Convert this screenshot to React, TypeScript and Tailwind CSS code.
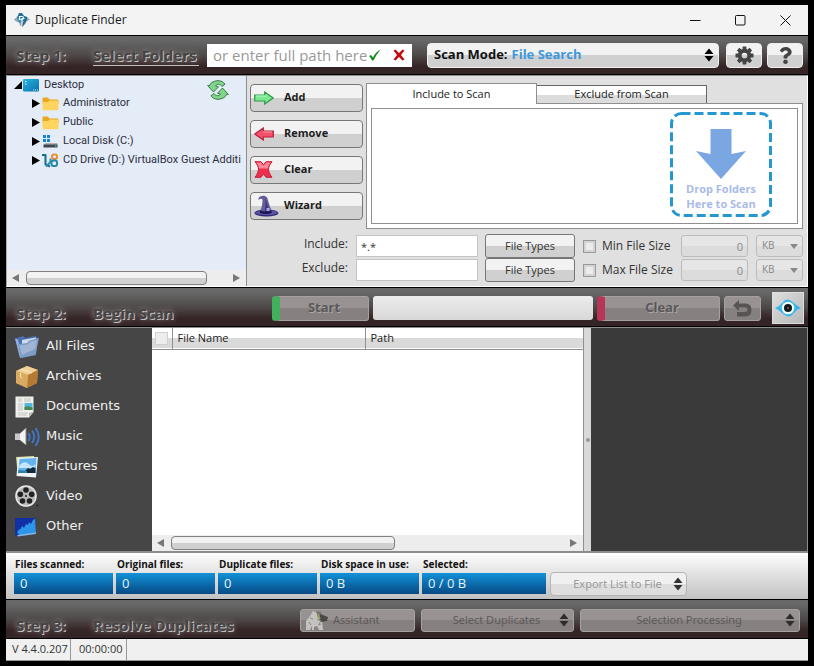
import type { ReactNode } from 'react';
import clsx from 'clsx';
import { FaQuestion } from 'react-icons/fa';

const silver = 'bg-linear-to-b from-[#f2f2f2] from-50% to-[#d0d0d0] to-50%';

function AppLogo() {
  return (
    <svg width="16" height="16" viewBox="0 0 16 16" aria-hidden="true">
      <path d="M0 7.500 4 4l1-3 3 1 2 2 3 1 3 2.500-4 2-2 1-1 4-3-1-1-3-3-1z" fill="#8fa9bd" />
      <path d="M5 1h3l2 3 3 1v3l-4 3-4-1-2-4z" fill="#1f7196" />
      <path d="M3 6h4v4l-2-1z" fill="#4597c0" />
      <path d="M5.500 4.500h2.500a1.500 1.500 0 0 1 0 3H5.500zM10.500 6.500H8V14M8 10h2.500" fill="none" stroke="#eef6fa" strokeWidth="1.200" />
      <path d="M9 10l4-2-2 4-3 3z" fill="#164e77" opacity=".8" />
    </svg>
  );
}

function DesktopIcon() {
  return (
    <svg width="16" height="13" viewBox="0 0 16 13" aria-hidden="true">
      <defs>
        <linearGradient id="desk" x1="0" y1="0" x2="1" y2="1">
          <stop offset="0" stopColor="#2ab4e0" />
          <stop offset="1" stopColor="#0871ad" />
        </linearGradient>
      </defs>
      <rect width="16" height="12.500" rx="1" fill="url(#desk)" />
      <path d="M2 2.500h1.500M2 5h1.500M10 11h1M12 11h1M14 11h1" stroke="#d9f6ff" strokeWidth="1.200" />
    </svg>
  );
}

function FolderIcon() {
  return (
    <svg width="17" height="14" viewBox="0 0 17 14" aria-hidden="true">
      <path d="M.5 1.500Q.5.5 1.500.5h4.300l1.700 2H15q1.500 0 1.500 1V7H.5z" fill="#e9a820" />
      <path d="M.5 5h5.500l1.800-1.500h7.700q1 0 1 1V12q0 1.300-1.300 1.300H1.800Q.5 13.300.5 12z" fill="#ffd45e" />
    </svg>
  );
}

function DiskIcon() {
  return (
    <svg width="17" height="14" viewBox="0 0 17 14" aria-hidden="true">
      <path d="M1 0h3v3H1zM5 0h3v3H5zM1 4h3v3H1zM5 4h3v3H5z" fill="#1486d8" />
      <path d="M3 8h12l1 2H2z" fill="#aeb4b8" />
      <path d="M1.500 9.500h14v3h-14z" fill="#3d474d" />
      <path d="M13 11h1.500" stroke="#4fe3a2" />
    </svg>
  );
}

function DriveIcon() {
  return (
    <svg width="17" height="15" viewBox="0 0 17 15" aria-hidden="true">
      <path d="M0 2h3.500v9.500L8 13.500" fill="none" stroke="#156b8c" strokeWidth="2" strokeLinejoin="round" />
      <path d="M4 13.500 8.500 9V5.500" fill="none" stroke="#2b8fb0" strokeWidth="2" />
      <rect x="10" y="1.500" width="5" height="4.500" rx="2" fill="none" stroke="#e79035" strokeWidth="2" />
      <rect x="9.500" y="7.500" width="5.500" height="5.500" rx="2" fill="none" stroke="#2587a8" strokeWidth="2" />
    </svg>
  );
}

function RefreshIcon() {
  return (
    <svg width="22" height="20" viewBox="0 0 22 20" fill="#7fd688" stroke="#3c7a48" strokeLinejoin="round" aria-hidden="true">
      <path d="M2 6C3.500 2.500 7.500.7 11 .7c3 0 5.500 1.200 7 3.500L15 6.500C13.500 4 10 3.500 8.500 6l3 .8L6.500 12 .6 5.500z" />
      <path d="M20 14c-1.500 3.500-5.500 5.300-9 5.300-3 0-5.500-1.200-7-3.500L7 13.500c1.500 2.500 5 3 6.500.5l-3-.8L15.500 8l5.900 6.500z" />
    </svg>
  );
}

function AddIcon() {
  return (
    <svg width="20" height="14" viewBox="0 0 20 14" aria-hidden="true">
      <path d="M.7 4h10V1l8.500 6-8.500 6v-3H.7z" fill="#7be88f" stroke="#2f9a48" strokeWidth="1.200" />
      <path d="M2 5h10" stroke="#b7f7c2" />
    </svg>
  );
}

function RemoveIcon() {
  return (
    <svg width="20" height="14" viewBox="0 0 20 14" aria-hidden="true">
      <path d="M19.300 4h-10V1L.8 7l8.500 6v-3h10z" fill="#f4506a" stroke="#b8203c" strokeWidth="1.200" />
      <path d="M9 5h9" stroke="#ff9bab" />
    </svg>
  );
}

function ClearIcon() {
  return (
    <svg width="19" height="17" viewBox="0 0 19 17" aria-hidden="true">
      <path d="M1 .7h6l2.500 3 2.500-3h6c-2 2.500-3.500 5-3.500 7.500s1.500 5.500 3.500 8.100h-6l-2.500-3.500L7 16.300H1c2-2.600 3.500-5.600 3.500-8.100S3 3.200 1 .7z" fill="#ef2f4c" stroke="#c41f3c" />
      <path d="M2.500 1.500h4.200l2.800 3.300 2.800-3.300h4.200q-2.500 3.500-2.700 6H5.200q-.2-2.500-2.700-6z" fill="#fb8797" />
    </svg>
  );
}

function WizardIcon() {
  return (
    <svg width="25" height="22" viewBox="0 0 25 22" aria-hidden="true">
      <ellipse cx="12.500" cy="18" rx="12" ry="3.600" fill="#2e2870" />
      <path d="M1 18c4-3 9-2 12-2s8-1 11 2c-5 3-18 3-23 0z" fill="#5a52a5" />
      <path d="M4.500 3C7 0 11 0 13 2.500c1.500 3 2 8 5.500 15-3 2-9 2-13 0C8.500 12 8.500 7 8.500 4.500 7.500 3.500 6 3.500 4.500 5z" fill="#635c9c" />
      <path d="M11 3c1.500 3 2 9 5.500 14.500-2 1-4 1-6 0C12 12 12 7 11 3z" fill="#37307a" />
      <path d="M6.500 15c3 2 7 2 10.500 0l1 2.500c-3 2-9 2-12.500 0z" fill="#1d1852" />
      <path d="M12.500 13h3v3h-3z" fill="#aaa5e8" />
    </svg>
  );
}

function DropArrow() {
  return (
    <svg width="50" height="50" viewBox="0 0 50 50" aria-hidden="true">
      <path d="M14.500 0h21v25L50 22 25 50 0 22l14.500 3z" fill="#7aa7e2" />
    </svg>
  );
}

function GearIcon() {
  return (
    <svg width="19" height="19" viewBox="-10 -10 20 20" aria-hidden="true">
      <circle r="5" fill="none" stroke="#444" strokeWidth="4" />
      {[0, 45, 90, 135, 180, 225, 270, 315].map((angle) => (
        <rect key={angle} x="-2" y="-9.500" width="4" height="5" rx=".5" fill="#444" transform={`rotate(${angle})`} />
      ))}
    </svg>
  );
}

function EyeIcon() {
  return (
    <svg width="26" height="18" viewBox="0 0 26 18" className="shrink-0" aria-hidden="true">
      <path d="M0 9Q4 8 7 4t6-3.500T19 4t7 5q-4 1-7 5t-6 3.500T7 14 0 9z" fill="#38b6ea" />
      <circle cx="13" cy="9" r="6.300" fill="#f2fafd" />
      <circle cx="13" cy="9" r="4" fill="#14181a" />
      <circle cx="13" cy="9" r=".7" fill="#ccc" />
    </svg>
  );
}

function UpDown({ className }: { className?: string }) {
  return (
    <svg width="10" height="14" viewBox="0 0 10 14" fill="currentColor" className={clsx('shrink-0', className)} aria-hidden="true">
      <path d="M.5 6 5 .5 9.500 6zM.5 8 5 13.500 9.500 8z" />
    </svg>
  );
}

function AllFilesIcon() {
  return (
    <svg width="24" height="24" viewBox="0 0 24 24" aria-hidden="true">
      <path d="M0 3.500 8 1l2 2 10-2 3 2-2 17-15 3z" fill="#4d6fae" />
      <path d="M7 5 21 2.500 19 17 7 19z" fill="#cfdcf2" />
      <path d="M0 3.500l3 1L7 22l-2 1z" fill="#8fb0e2" />
      <path d="M3 9l9-1 2-2.500L24 3l-3.500 17L6 23z" fill="#7f9cc4" />
      <path d="M4.500 10.500l8-1L15 7l7-2-2 9-13 6z" fill="#b5c7de" opacity=".6" />
    </svg>
  );
}

function ArchivesIcon() {
  return (
    <svg width="24" height="22" viewBox="0 0 24 22" aria-hidden="true">
      <path d="M1 5 12 0l11 4-1 13-10 5L1 17z" fill="#c8924a" />
      <path d="M1 5 12 0l11 4-10 5z" fill="#efd095" />
      <path d="M13 9l10-5-1 13-10 5z" fill="#b37b34" />
      <path d="M1 5l12 4-1 13L1 17z" fill="#dbaa62" />
      <path d="M6 3l11 4M5.500 7v4l1.500 1" stroke="#f7e6c0" fill="none" />
    </svg>
  );
}

function DocumentsIcon() {
  return (
    <svg width="20" height="22" viewBox="0 0 20 22" aria-hidden="true">
      <path d="M.5.500h18V16L14 21.500H.500z" fill="#efefec" />
      <path d="M18.500 16 14 21.500V17z" fill="#b9b9b5" />
      <path d="M3 3h4M9 3h7M3 5h4M9 5h7M3 8h5M3 10h5M3 12h5M3 14h5M3 17h10M3 19h9" stroke="#c2c5c4" />
      <path d="M9.500 7h8v7h-8z" fill="#57b5dc" />
      <path d="M9.500 11l3-1 5 1.500V14h-8z" fill="#4c8a53" />
    </svg>
  );
}

function MusicIcon() {
  return (
    <svg width="25" height="20" viewBox="0 0 25 20" aria-hidden="true">
      <path d="M0 6.500h5V13H0z" fill="#c9c9c9" />
      <path d="M5 6.500 11 1v17l-6-5z" fill="#f4f4f4" />
      <path d="M11 1v17" stroke="#888" />
      <path d="M13.500 6q2.500 4 0 8M17 3.500q4.500 6.500 0 12.500M20.500 1q6.500 9 0 18" fill="none" stroke="#4273c4" strokeWidth="2" />
    </svg>
  );
}

function PicturesIcon() {
  return (
    <svg width="23" height="22" viewBox="0 0 23 22" aria-hidden="true">
      <path d="M1 1 19 0l1 16-17 4z" fill="#d7dba8" />
      <path d="M3 2 23 1l-2 20.500L1.500 20z" fill="#f0f5f8" />
      <path d="M4.500 3l17-1-1 15H3z" fill="#63b4ec" />
      <path d="M4.500 9q5-5 9-1t7 0l-.5 4H4z" fill="#c5e6fa" />
      <path d="M10 15l3-3 2 1 3-2 2.500 1V17H10z" fill="#13283a" />
      <path d="M3.500 14 12 15v2H3z" fill="#2b7fa8" />
    </svg>
  );
}

function VideoIcon() {
  return (
    <svg width="24" height="24" viewBox="0 0 24 24" aria-hidden="true">
      <circle cx="11" cy="11" r="10" fill="#b8b8b8" stroke="#e6e6e6" strokeWidth="1.600" />
      <g fill="#222">
        <circle cx="11" cy="5" r="2.800" />
        <circle cx="5.300" cy="9.200" r="2.800" />
        <circle cx="16.700" cy="9.200" r="2.800" />
        <circle cx="7.500" cy="16" r="2.800" />
        <circle cx="14.500" cy="16" r="2.800" />
        <circle cx="11" cy="11" r="1" />
        <circle cx="22.500" cy="20.500" r="1" />
      </g>
    </svg>
  );
}

function OtherIcon() {
  return (
    <svg width="21" height="19" viewBox="0 0 21 19" aria-hidden="true">
      <path d="M0 0h20l1 16-18 2.500L0 17z" fill="#1230a5" />
      <path d="M2 15l2-4 1 1 2-4 2 2 2-4 2 1 1-3 2 2 2-4 2-1 1 14-16 2z" fill="#2c96ea" />
      <path d="M3 18.500 21 16l-.2-1.500L2 17z" fill="#8fb7da" />
    </svg>
  );
}

function AssistantIcon() {
  return (
    <svg width="24" height="21" viewBox="0 0 24 21" className="-my-1" aria-hidden="true">
      <path d="M1 20V11l4-5 3-5 5 2 4 7 1 10h-4l-2-4-3 1v3H7v-4l-2 4z" fill="#c4c2be" />
      <path d="M11 1l5 1 1 5-4 1z" fill="#77746f" />
      <path d="M15 4l8 3-1 4-6 1-2-3z" fill="#4b4946" />
      <path d="M12 9l4 2-2 3M4 12l2 3M13 15l3-1M5 8l3 1" stroke="#8a8884" fill="none" />
      <path d="M13 4l2 5" stroke="#99a04d" strokeWidth="1.500" />
    </svg>
  );
}

const treeItems = [
  { label: 'Administrator', icon: <FolderIcon /> },
  { label: 'Public', icon: <FolderIcon /> },
  { label: 'Local Disk (C:)', icon: <DiskIcon /> },
  { label: 'CD Drive (D:) VirtualBox Guest Additi', icon: <DriveIcon /> },
];

const folderActions = [
  { label: 'Add', icon: <AddIcon /> },
  { label: 'Remove', icon: <RemoveIcon /> },
  { label: 'Clear', icon: <ClearIcon /> },
  { label: 'Wizard', icon: <WizardIcon /> },
];

const categories = [
  { label: 'All Files', icon: <AllFilesIcon /> },
  { label: 'Archives', icon: <ArchivesIcon /> },
  { label: 'Documents', icon: <DocumentsIcon /> },
  { label: 'Music', icon: <MusicIcon /> },
  { label: 'Pictures', icon: <PicturesIcon /> },
  { label: 'Video', icon: <VideoIcon /> },
  { label: 'Other', icon: <OtherIcon /> },
];

const stats = [
  { label: 'Files scanned:', value: '0', width: 'w-[99px]' },
  { label: 'Original files:', value: '0', width: 'w-[99px]' },
  { label: 'Duplicate files:', value: '0', width: 'w-[99px]' },
  { label: 'Disk space in use:', value: '0 B', width: 'w-[99px]' },
  { label: 'Selected:', value: '0 / 0 B', width: 'w-[124px]' },
];

const emboss = '[text-shadow:1px_1px_0_#c4c0c0,0_0_6px_#a09a9a]';

function StepBar({ step, title, link, children }: { step: string; title: string; link?: boolean; children: ReactNode }) {
  return (
    <div className="flex h-10 shrink-0 items-center border-y border-black bg-linear-to-b from-[#686868] from-10% via-[#4e4949] via-50% to-[#352426] to-80% pr-1">
      <h2 className={clsx('flex shrink-0 pl-2.5 text-[15px] leading-5 font-bold whitespace-nowrap text-[#454343]', emboss, !link && 'pt-3')}>
        <span className="w-[77px]">{step}</span>
        {link ? (
          <a href="#folders" className="w-[106px] border-b border-[#c4c0c0]">
            {title}
          </a>
        ) : (
          <span>{title}</span>
        )}
      </h2>
      {children}
    </div>
  );
}

function HScroll({ thumb }: { thumb: string }) {
  return (
    <div className="flex h-4 shrink-0 items-center bg-[#ededed] text-[#777]">
      <svg width="19" height="8" viewBox="0 0 19 8" fill="currentColor" aria-hidden="true">
        <path d="M12 0v8L5 4z" />
      </svg>
      <div className="flex-1">
        <div className={clsx('h-3.5 rounded-sm border border-[#808080]', silver, thumb)} />
      </div>
      <svg width="19" height="8" viewBox="0 0 19 8" fill="currentColor" aria-hidden="true">
        <path d="M6 0v8l7-4z" />
      </svg>
    </div>
  );
}

function TitleBar() {
  return (
    <header className="flex h-[30px] shrink-0 items-center bg-[#f3f3f3] pl-2">
      <AppLogo />
      <h1 className="flex-1 pl-[5px] text-xs text-[#1a1a1a]">Duplicate Finder</h1>
      <button type="button" aria-label="Minimize" className="flex w-[45px] justify-center">
        <svg width="11" height="11" stroke="#111"><path d="M0 5.500h10.500" /></svg>
      </button>
      <button type="button" aria-label="Maximize" className="flex w-[45px] justify-center">
        <svg width="11" height="11" fill="none" stroke="#111"><rect x=".5" y=".5" width="9.500" height="9.500" rx="1" /></svg>
      </button>
      <button type="button" aria-label="Close" className="flex w-[45px] justify-center">
        <svg width="11" height="11" stroke="#111"><path d="M.5.500l10 10M10.500.500l-10 10" /></svg>
      </button>
    </header>
  );
}

function FolderTree() {
  return (
    <div className="flex w-[240px] shrink-0 flex-col border-r border-[#8f8f8f] bg-[#e3ecf7]">
      <div className="flex flex-1 items-start font-['Roboto',sans-serif] text-[11px] text-[#2d2d3d]">
        <ul role="tree" className="w-full">
          <li role="treeitem" aria-expanded="true">
            <div className="flex h-[18px] items-center pl-[7px]">
              <svg width="8" height="8" className="mr-px" aria-hidden="true"><path d="M8 0v8H0z" /></svg>
              <DesktopIcon />
              <span className="flex-1 pl-[5px]">Desktop</span>
              <button type="button" aria-label="Refresh" className="mt-2.5 mr-[17px] h-5">
                <RefreshIcon />
              </button>
            </div>
            <ul role="group">
              {treeItems.map((item) => (
                <li key={item.label} role="treeitem" className="flex h-[19px] items-center pl-[25px] whitespace-nowrap">
                  <svg width="8" height="9" className="mr-0.5 shrink-0" aria-hidden="true"><path d="M0 0l8 4.500L0 9z" /></svg>
                  <span className="w-[21px] shrink-0">{item.icon}</span>
                  {item.label}
                </li>
              ))}
            </ul>
          </li>
        </ul>
      </div>
      <HScroll thumb="w-[90%]" />
    </div>
  );
}

const faded = 'rounded-[3px] border border-[#bbb] bg-linear-to-b from-[#e6e6e6] from-50% to-[#dcdcdc] to-50%';

function FilterRow({ label, value, sizeLabel }: { label: string; value: string; sizeLabel: string }) {
  const id = label.toLowerCase();
  return (
    <div className="flex h-6 items-center text-xs text-[#333]">
      <label htmlFor={id} className="w-[98px] pb-1 text-right">{label}:</label>
      <input id={id} type="text" defaultValue={value} className="ml-2 h-[22px] w-0 flex-1 border border-[#c4c4c4] bg-white px-1 text-[11px]" />
      <button type="button" className={clsx('ml-[7px] h-6 w-[90px] rounded-[3px] border border-[#777] text-[11px]', silver)}>
        File Types
      </button>
      <label className="ml-2 flex w-[98px] items-center gap-1.5 whitespace-nowrap">
        <input type="checkbox" className="size-[13px] appearance-none border border-[#999] bg-[#ececec] shadow-[inset_0_0_0_2px_#d4d4d4]" />
        {sizeLabel}
      </label>
      <input type="text" aria-label={sizeLabel} defaultValue="0" disabled className={clsx('h-[22px] w-[67px] pr-1 text-right text-[11px] text-[#888]', faded)} />
      <div className={clsx('relative ml-2 h-[22px] w-[47px]', faded)}>
        <select aria-label={`${sizeLabel} unit`} disabled className="block h-full w-full appearance-none pl-[5px] text-[10px] text-[#888] opacity-100">
          <option>KB</option>
          <option>MB</option>
        </select>
        <svg width="8" height="5" className="absolute top-2 right-1" aria-hidden="true"><path d="M0 0h8L4 5z" fill="#888" /></svg>
      </div>
    </div>
  );
}

function ScanSettings() {
  return (
    <div className="min-w-0 flex-1 bg-[#e0e0e0] pr-1 pl-[3px]">
      <div className="flex gap-[3px] pt-[7px]">
        <div className="flex w-[113px] flex-col gap-2 pt-px">
          {folderActions.map((action) => (
            <button key={action.label} type="button" className={clsx('flex h-7 items-center rounded border border-[#777] pb-0.5 pl-0.5 text-[11px] font-bold text-[#1c1c1c]', silver)}>
              <span className="flex w-[31px] shrink-0 justify-start pt-px pl-px">{action.icon}</span>
              {action.label}
            </button>
          ))}
        </div>
        <div className="flex min-w-0 flex-1 flex-col">
          <div role="tablist" className="flex items-end text-[11px] text-[#222]">
            <button type="button" role="tab" aria-selected="true" className="z-10 -mb-px h-[21px] w-[171px] border border-b-0 border-[#8f8f8f] bg-white">
              Include to Scan
            </button>
            <button type="button" role="tab" aria-selected="false" className="-ml-px h-[18px] w-[171px] border border-b-0 border-[#666] bg-linear-to-b from-white from-50% to-[#dcdcdc] to-50%">
              Exclude from Scan
            </button>
          </div>
          <div role="tabpanel" className="border border-[#8f8f8f] bg-white p-1">
            <div className="flex justify-end border border-[#8f8f8f] pt-[3px] pb-1.5 pr-[25px]">
              <div className="relative flex h-[105px] w-[102px] flex-col items-center pt-[17px] text-center text-[11px] leading-[15px] font-bold text-[#a9bbe6]">
                <svg width="102" height="105" className="absolute inset-0" aria-hidden="true">
                  <rect x="1.500" y="1.500" width="99" height="102" rx="10" fill="none" stroke="#2496d0" strokeWidth="3" strokeDasharray="9 4" />
                </svg>
                <DropArrow />
                <p className="pt-0.5">Drop Folders<br />Here to Scan</p>
              </div>
            </div>
          </div>
        </div>
      </div>
      <div className="pt-[5px]">
        <FilterRow label="Include" value="*.*" sizeLabel="Min File Size" />
        <FilterRow label="Exclude" value="" sizeLabel="Max File Size" />
      </div>
    </div>
  );
}

const dim = 'rounded-[3px] border border-[#a5a1a1] bg-linear-to-b from-[#989292] from-50% to-[#868080] to-50%';
const dimLabel = 'text-[13px] font-bold text-[#5c5858] [text-shadow:1px_1px_0_#aaa6a6]';

function Results() {
  return (
    <div className="flex flex-1 border-t border-b-2 border-[#8c8c8c] bg-[#d9d9d9]">
      <nav className="w-[146px] shrink-0 bg-[#464646] pt-[3px]">
        {categories.map((category) => (
          <button key={category.label} type="button" className="flex h-[30px] w-full items-center pl-[9px] font-['DejaVu_Sans',sans-serif] text-[13px] text-[#f0f0f0]">
            <span className="flex w-[31px] pt-0.5">{category.icon}</span>
            {category.label}
          </button>
        ))}
      </nav>
      <div className="flex min-w-0 flex-1 flex-col border-r border-[#8f8f8f] bg-white">
        <table className="w-full table-fixed text-left text-[11px] text-[#222]">
          <thead>
            <tr className="h-[21px] border-b border-[#8f8f8f] bg-linear-to-b from-white from-50% to-[#dadada] to-50%">
              <th className="w-5 border-r border-[#8f8f8f] pl-[3px]">
                <input type="checkbox" aria-label="Select all" className="block size-[13px] appearance-none border border-[#d0d0d0] bg-[#ededed]" />
              </th>
              <th className="w-[193px] border-r border-[#8f8f8f] pl-[5px] font-normal">File Name</th>
              <th className="pl-[5px] font-normal">Path</th>
            </tr>
          </thead>
          <tbody />
        </table>
        <div className="flex-1" />
        <HScroll thumb="w-[57%]" />
      </div>
      <div className="flex w-[7px] items-center justify-center">
        <span className="size-1 rounded-full bg-[#999]" />
      </div>
      <div className="w-[217px] border-r border-[#8c8c8c] bg-[#3a3a3a]" />
    </div>
  );
}

function Stats() {
  return (
    <div className="flex h-[46px] shrink-0 gap-[3px] bg-linear-to-b from-[#fdfdfd] to-[#c2c2c2] pt-[5px] pl-2">
      {stats.map((stat) => (
        <dl key={stat.label} className={clsx('shrink-0', stat.width)}>
          <dt className="h-[15px] pl-px text-[10px] leading-[13px] font-bold whitespace-nowrap text-[#111]">{stat.label}</dt>
          <dd className="h-[21px] bg-linear-to-b from-[#1292d8] to-[#084a86] pl-1.5 text-[13px] leading-5 text-[#e6f4ff]">{stat.value}</dd>
        </dl>
      ))}
      <button type="button" disabled aria-haspopup="menu" className="mt-3.5 ml-px flex h-6 w-[137px] items-center rounded border border-[#b5b5b5] bg-linear-to-b from-[#f0f0f0] from-50% to-[#dedede] to-50% px-[3px] font-['Noto_Sans',sans-serif] text-[11px] text-[#999]">
        <span className="flex-1 pl-2">Export List to File</span>
        <UpDown className="text-[#333]" />
      </button>
    </div>
  );
}

export default function App() {
  return (
    <div className="flex min-h-screen flex-col bg-black px-1.5 py-[5px] font-['Open_Sans','Noto_Sans',sans-serif]">
      <TitleBar />

      <StepBar step="Step 1:" title="Select Folders" link>
        <div className="ml-2 flex h-[23px] w-[205px] shrink-0 items-center bg-white">
          <input type="text" aria-label="Folder path" placeholder="or enter full path here" className="w-[162px] pl-1.5 text-[15px] placeholder:text-[#999]" />
          <button type="button" aria-label="Accept path">
            <svg width="12" height="12" viewBox="0 0 12 12"><path d="M0 7l2-1 2 2.500Q6.500 3 11.500.500 7 6 4.500 11.500H3Q2 8.500 0 7z" fill="#118a1b" /></svg>
          </button>
          <button type="button" aria-label="Clear path" className="ml-3">
            <svg width="12" height="12" viewBox="0 0 12 12"><path d="M.5 1.500 2.500.5 6 4 9.500.5l2 1L8 6l3.500 4.500-2 1L6 8l-3.500 3.500-2-1L4 6z" fill="#c00c12" /></svg>
          </button>
        </div>
        <div className={clsx('ml-[15px] flex h-[25px] min-w-0 flex-1 items-center rounded-sm border border-[#eee] pl-1.5 text-[13px] font-bold', silver)}>
          <label htmlFor="scan-mode" className="text-[#111]">Scan Mode:</label>
          <select id="scan-mode" className="ml-1 min-w-0 flex-1 appearance-none text-[#3f98dc]">
            <option>File Search</option>
          </select>
          <UpDown className="mr-1 text-black" />
        </div>
        <button type="button" aria-label="Settings" className={clsx('ml-[7px] flex h-[25px] w-9 shrink-0 items-center justify-center rounded-sm border border-[#eee]', silver)}>
          <GearIcon />
        </button>
        <button type="button" aria-label="Help" className={clsx('mr-px ml-[5px] flex h-[25px] w-9 shrink-0 items-center justify-center rounded-sm border border-[#eee] text-[#444]', silver)}>
          <FaQuestion size={17} />
        </button>
      </StepBar>

      <div className="flex h-[212px] shrink-0 border border-white border-t-[#8f8f8f] border-l-[#aaa]">
        <FolderTree />
        <ScanSettings />
      </div>

      <StepBar step="Step 2:" title="Begin Scan">
        <div className="flex min-w-0 flex-1 items-center justify-end gap-1 pt-0.5">
          <button type="button" disabled className={clsx('h-[25px] w-[97px] shrink-0 border-l-8! border-l-[#43b05c]!', dim, dimLabel)}>
            Start
          </button>
          <div role="progressbar" aria-label="Scan progress" aria-valuenow={0} className="h-6 w-[220px] rounded-[3px] bg-linear-to-b from-[#ececec] to-[#d8d8d8]" />
          <button type="button" disabled className={clsx('h-[25px] w-[123px] shrink-0 border-l-8! border-l-[#b83558]!', dim, dimLabel)}>
            Clear
          </button>
          <button type="button" disabled aria-label="Undo" className={clsx('flex h-[25px] w-[37px] shrink-0 items-center justify-center text-[#585454]', dim)}>
            <svg width="19" height="17" viewBox="0 0 19 17" aria-hidden="true">
              <path d="M0 5.500 6 0v3.500h6.500q6 0 6 6.500t-6 6.500H4V12h8q2.500 0 2.500-2.300T12 7.500H6V11z" fill="currentColor" />
            </svg>
          </button>
          <button type="button" aria-label="Preview" className="ml-[7px] flex h-8 w-8 shrink-0 items-center justify-center border border-[#ddd] bg-linear-to-br from-[#dedede] to-[#b8b8b8]">
            <EyeIcon />
          </button>
        </div>
      </StepBar>

      <Results />
      <Stats />

      <StepBar step="Step 3:" title="Resolve Duplicates">
        <div className="ml-auto flex shrink-0 gap-1.5 pt-0.5 pr-1 font-['Noto_Sans',sans-serif] text-[11px] text-[#5e5a5a]">
          <button type="button" disabled className={clsx('flex h-[23px] w-[115px] items-center gap-1 pl-1', dim)}>
            <AssistantIcon />
            Assistant
          </button>
          <button type="button" disabled aria-haspopup="menu" className={clsx('flex h-[23px] w-[153px] items-center px-1', dim)}>
            <span className="flex-1 pl-2">Select Duplicates</span>
            <UpDown className="text-[#2d2b2b]" />
          </button>
          <button type="button" disabled aria-haspopup="menu" className={clsx('flex h-[23px] w-[220px] items-center px-1', dim)}>
            <span className="flex-1 pl-2">Selection Processing</span>
            <UpDown className="text-[#2d2b2b]" />
          </button>
        </div>
      </StepBar>

      <footer className="flex h-[22px] shrink-0 border-b border-[#999] bg-[#f0f0f0] text-[11px] leading-5 text-[#333]">
        <span className="w-[65px] border-r border-[#999] pl-1.5">V 4.4.0.207</span>
        <span className="w-14 border-r border-[#999] pl-2">00:00:00</span>
      </footer>
    </div>
  );
}
